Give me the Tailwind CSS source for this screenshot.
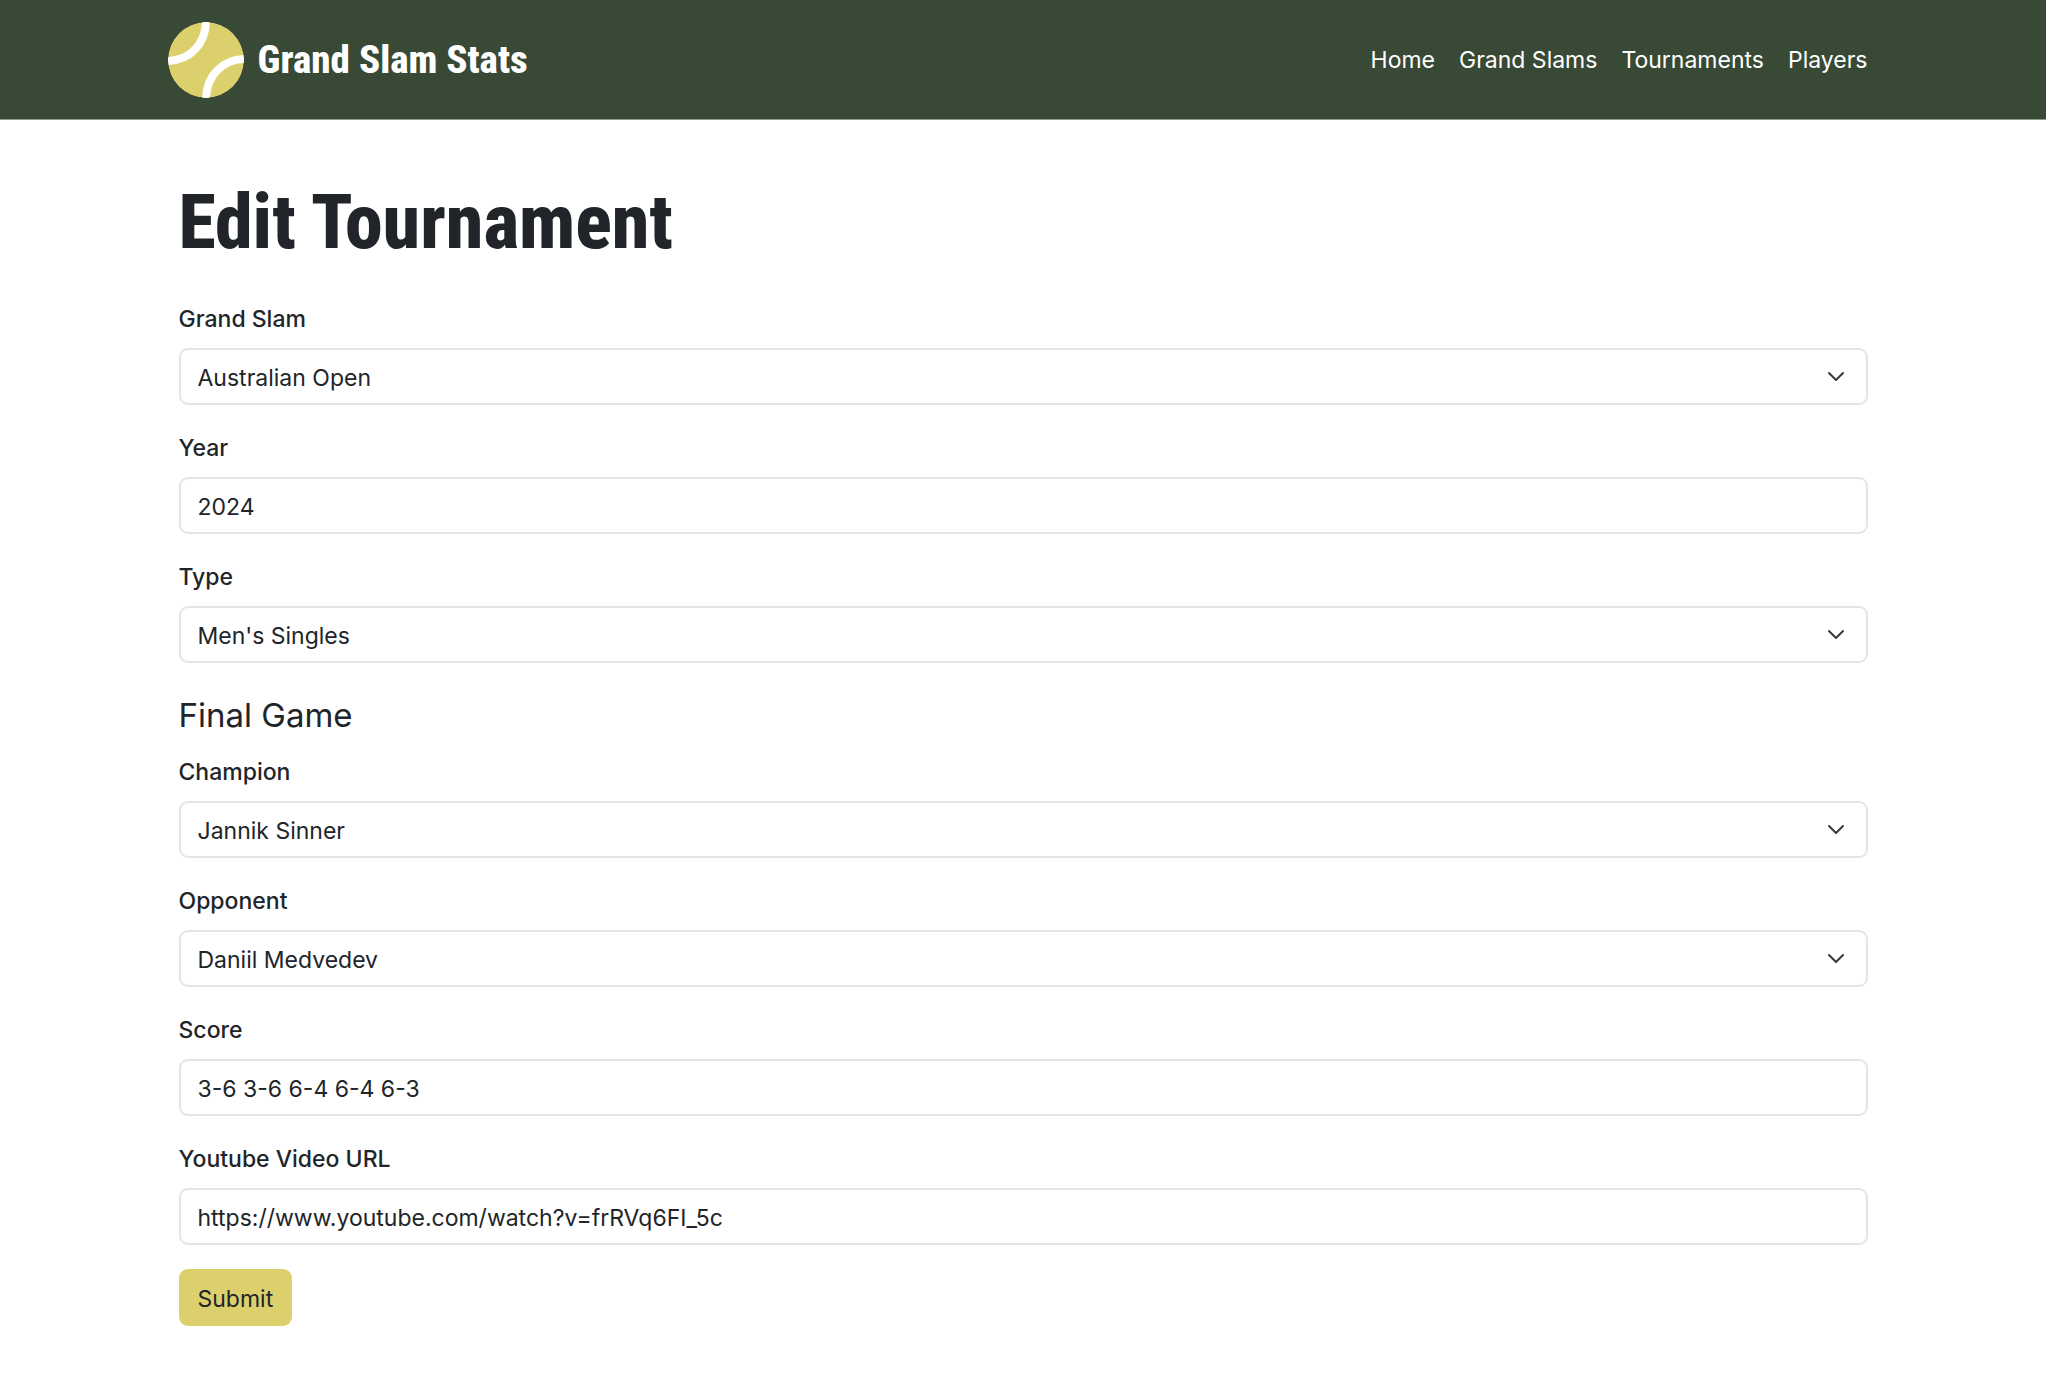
<!DOCTYPE html>
<html lang="en">
<head>
  <meta charset="UTF-8">
  <meta name="viewport" content="width=device-width, initial-scale=1.0">
  <title>Edit Tournament - Grand Slam Stats</title>
  <script src="https://cdn.jsdelivr.net/npm/@tailwindcss/browser@4"></script>
</head>
<body class="bg-white font-['Inter',sans-serif] text-[23px] leading-[38px] text-[#212529]">

  <!-- Navbar -->
  <header class="bg-[#384935] border-b border-[#8f998d]">
    <nav class="max-w-[1733px] mx-auto px-[22px] h-[119px] flex items-center justify-between text-white">
      <a href="#" class="flex items-center gap-[14px] -ml-[11px]">
        <svg class="size-[76px]" viewBox="0 0 76 76" fill="none">
          <clipPath id="ball"><circle cx="38" cy="38" r="38"/></clipPath>
          <g clip-path="url(#ball)">
            <circle cx="38" cy="38" r="38" fill="#dcd06c"/>
            <path d="M38 -2C38 22 22 39 -2 39M38 78C38 54 54 37 78 37" stroke="#fff" stroke-width="8"/>
          </g>
        </svg>
        <span class="font-['Roboto_Condensed','Liberation_Sans_Narrow',sans-serif] font-extrabold text-[39px]">Grand Slam Stats</span>
      </a>
      <ul class="flex gap-6">
        <li><a href="#">Home</a></li>
        <li><a href="#">Grand Slams</a></li>
        <li><a href="#">Tournaments</a></li>
        <li><a href="#">Players</a></li>
      </ul>
    </nav>
  </header>

  <!-- Edit form -->
  <main class="max-w-[1733px] mx-auto px-[22px] pt-14 pb-14">
    <h1 class="font-['Roboto_Condensed','Liberation_Sans_Narrow',sans-serif] font-extrabold text-[76px] leading-[92px] mb-8">Edit Tournament</h1>

    <form>
      <div class="mb-6">
        <label for="grandSlam" class="block mb-[10px] font-medium">Grand Slam</label>
        <div class="grid items-center">
          <select id="grandSlam" class="col-start-1 row-start-1 appearance-none w-full h-[57px] px-[17px] pt-[2px] bg-white border-2 border-[#e3e5ea] rounded-[9px]">
            <option>Australian Open</option>
          </select>
          <svg class="col-start-1 row-start-1 justify-self-end mr-[22px] w-5 h-5 pointer-events-none" viewBox="0 0 20 20" fill="none" stroke="#343a40" stroke-width="2" stroke-linecap="round" stroke-linejoin="round"><path d="M3 6l7 7 7-7"/></svg>
        </div>
      </div>

      <div class="mb-6">
        <label for="year" class="block mb-[10px] font-medium">Year</label>
        <input id="year" type="text" value="2024" class="block w-full h-[57px] px-[17px] pt-[2px] border-2 border-[#e3e5ea] rounded-[9px]">
      </div>

      <div class="mb-6">
        <label for="type" class="block mb-[10px] font-medium">Type</label>
        <div class="grid items-center">
          <select id="type" class="col-start-1 row-start-1 appearance-none w-full h-[57px] px-[17px] pt-[2px] bg-white border-2 border-[#e3e5ea] rounded-[9px]">
            <option>Men's Singles</option>
          </select>
          <svg class="col-start-1 row-start-1 justify-self-end mr-[22px] w-5 h-5 pointer-events-none" viewBox="0 0 20 20" fill="none" stroke="#343a40" stroke-width="2" stroke-linecap="round" stroke-linejoin="round"><path d="M3 6l7 7 7-7"/></svg>
        </div>
      </div>

      <h2 class="text-[33px] leading-[56px] mb-[10px]">Final Game</h2>

      <div class="mb-6">
        <label for="champion" class="block mb-[10px] font-medium">Champion</label>
        <div class="grid items-center">
          <select id="champion" class="col-start-1 row-start-1 appearance-none w-full h-[57px] px-[17px] pt-[2px] bg-white border-2 border-[#e3e5ea] rounded-[9px]">
            <option>Jannik Sinner</option>
          </select>
          <svg class="col-start-1 row-start-1 justify-self-end mr-[22px] w-5 h-5 pointer-events-none" viewBox="0 0 20 20" fill="none" stroke="#343a40" stroke-width="2" stroke-linecap="round" stroke-linejoin="round"><path d="M3 6l7 7 7-7"/></svg>
        </div>
      </div>

      <div class="mb-6">
        <label for="opponent" class="block mb-[10px] font-medium">Opponent</label>
        <div class="grid items-center">
          <select id="opponent" class="col-start-1 row-start-1 appearance-none w-full h-[57px] px-[17px] pt-[2px] bg-white border-2 border-[#e3e5ea] rounded-[9px]">
            <option>Daniil Medvedev</option>
          </select>
          <svg class="col-start-1 row-start-1 justify-self-end mr-[22px] w-5 h-5 pointer-events-none" viewBox="0 0 20 20" fill="none" stroke="#343a40" stroke-width="2" stroke-linecap="round" stroke-linejoin="round"><path d="M3 6l7 7 7-7"/></svg>
        </div>
      </div>

      <div class="mb-6">
        <label for="score" class="block mb-[10px] font-medium">Score</label>
        <input id="score" type="text" value="3-6 3-6 6-4 6-4 6-3" class="block w-full h-[57px] px-[17px] pt-[2px] border-2 border-[#e3e5ea] rounded-[9px]">
      </div>

      <div class="mb-6">
        <label for="videoUrl" class="block mb-[10px] font-medium">Youtube Video URL</label>
        <input id="videoUrl" type="text" value="https://www.youtube.com/watch?v=frRVq6FI_5c" class="block w-full h-[57px] px-[17px] pt-[2px] border-2 border-[#e3e5ea] rounded-[9px]">
      </div>

      <button type="submit" class="h-[57px] px-[19px] pt-[2px] bg-[#dcd06c] rounded-[9px]">Submit</button>
    </form>
  </main>

</body>
</html>
